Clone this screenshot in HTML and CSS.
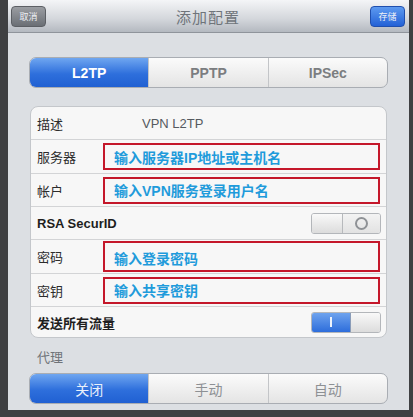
FILE: index.html
```html
<!DOCTYPE html>
<html lang="zh-CN">
  <head>
    <meta charset="UTF-8" />
    <title>添加配置</title>
    <link rel="stylesheet" href="styles.css">
  </head>
  <body>
    <div class="sheet">
      <div class="navbar">
        <span class="navBtn cancel">取消</span>
        <span class="title">添加配置</span>
        <span class="navBtn save">存储</span>
      </div>

      <div class="content">
        <div class="segmented">
          <span class="seg active">L2TP</span>
          <span class="seg">PPTP</span>
          <span class="seg">IPSec</span>
        </div>

        <ul class="group">
          <li class="row first">
            <span class="label">描述</span>
            <span class="value">VPN L2TP</span>
          </li>
          <li class="row tall">
            <span class="label">服务器</span>
            <span class="hint">输入服务器IP地址或主机名</span>
          </li>
          <li class="row">
            <span class="label">帐户</span>
            <span class="hint">输入VPN服务登录用户名</span>
          </li>
          <li class="row">
            <span class="label bold">RSA SecurID</span>
            <span class="toggle off">
              <span class="knob"></span>
              <span class="mark"><i class="ring"></i></span>
            </span>
          </li>
          <li class="row tall">
            <span class="label">密码</span>
            <span class="hint big">输入登录密码</span>
          </li>
          <li class="row">
            <span class="label">密钥</span>
            <span class="hint">输入共享密钥</span>
          </li>
          <li class="row last">
            <span class="label bold">发送所有流量</span>
            <span class="toggle on">
              <span class="mark"><i class="bar"></i></span>
              <span class="knob"></span>
            </span>
          </li>
        </ul>

        <p class="caption">代理</p>

        <div class="segmented cn">
          <span class="seg active">关闭</span>
          <span class="seg">手动</span>
          <span class="seg">自动</span>
        </div>
      </div>
    </div>
  </body>
</html>
```

FILE: styles.css
```css
body {
  margin: 0;
  height: 417px;
  overflow: hidden;
  background-color: #3f4042;
  font-family: "Liberation Sans", "Noto Sans CJK SC", sans-serif;
}

.sheet {
  margin: 0 4px 0 8px;
  height: 410px;
  background-color: #dcdfe3;
  overflow: hidden;
}

/* top bar */
.navbar {
  height: 32px;
  display: flex;
  align-items: center;
  justify-content: space-between;
  padding: 0 4px 0 3px;
  background: linear-gradient(#f4f5f7, #d3d6db 60%, #b4b9c0);
  border-bottom: 1px solid #8f949b;
}
.title {
  font-size: 15px;
  color: #6f747a;
  letter-spacing: 1px;
}
.navBtn {
  width: 35px;
  height: 21px;
  line-height: 21px;
  text-align: center;
  font-size: 9px;
  color: #eef1f6;
  border-radius: 4px;
  box-sizing: border-box;
}
.cancel {
  background: linear-gradient(#9a9da2, #6b6f75);
  border: 1px solid #5c5f64;
}
.save {
  background: linear-gradient(#5d9af0, #2361d6);
  border: 1px solid #1f4fae;
}

.content {
  padding: 24px 21px 0 21px;
}

/* segmented control */
.segmented {
  display: flex;
  height: 29px;
  border: 1px solid #a9adb3;
  border-radius: 7px;
  overflow: hidden;
  background: linear-gradient(#fbfbfb, #e4e4e4);
}
.seg {
  flex: 1;
  display: flex;
  align-items: center;
  justify-content: center;
  font-size: 14px;
  font-weight: bold;
  color: #7b7d80;
  border-left: 1px solid #c3c5c8;
}
.seg:first-child {
  border-left: none;
}
.seg.active {
  color: #fff;
  background: linear-gradient(#6fa6f0, #2e6fdc 55%, #2060d2);
}
.cn .seg {
  font-weight: normal;
  font-size: 14px;
  color: #8d9094;
}
.cn .seg.active {
  color: #e9f0fb;
}

/* table group */
.group {
  list-style: none;
  margin: 18px 1px 0 1px;
  padding: 0;
  background-color: #f7f7f7;
  border: 1px solid #c4c7cb;
  border-radius: 8px;
}
.row {
  height: 33px;
  display: flex;
  align-items: center;
  padding: 0 5px 0 6px;
  border-top: 1px solid #d3d4d6;
  box-sizing: border-box;
}
.row.first {
  border-top: none;
  height: 32px;
}
.row.tall {
  height: 34px;
}
.row.last {
  height: 31px;
}
.label {
  width: 66px;
  font-size: 13px;
  color: #2c2c2c;
}
.label.bold {
  width: auto;
  flex: 1;
  font-weight: bold;
  color: #1e1e1e;
}
.value {
  margin-left: 39px;
  font-size: 13px;
  color: #555a60;
  padding: 2px 0;
}
.hint {
  flex: 1;
  height: 27px;
  margin-right: 1px;
  box-sizing: border-box;
  border: 2px solid #c4172a;
  padding-left: 9px;
  display: flex;
  align-items: center;
  font-size: 14px;
  font-weight: bold;
  color: #1f9bdb;
}
.hint.big {
  height: 31px;
  padding-top: 2px;
}

/* switches */
.toggle {
  width: 70px;
  height: 21px;
  display: flex;
  border: 1px solid #b3b6ba;
  border-radius: 3px;
  overflow: hidden;
  box-sizing: border-box;
}
.knob {
  width: 30px;
  background: linear-gradient(#f9f9f9, #dcdcdc);
  border-right: 1px solid #b7b9bc;
}
.on .knob {
  width: 29px;
  border-right: none;
  border-left: 1px solid #8a9cb8;
}
.mark {
  flex: 1;
  display: flex;
  align-items: center;
  justify-content: center;
  background: linear-gradient(#f3f3f3, #e2e2e2);
}
.on .mark {
  background: linear-gradient(#6ea3ee, #2d6ddb);
}
.ring {
  width: 9px;
  height: 9px;
  border: 2px solid #8f9296;
  border-radius: 50%;
}
.bar {
  width: 2px;
  height: 10px;
  background-color: #eef3fb;
}

.caption {
  margin: 11px 0 0 8px;
  height: 18px;
  line-height: 18px;
  font-size: 13px;
  color: #6f7378;
}
.segmented.cn {
  margin-top: 6px;
}
```
